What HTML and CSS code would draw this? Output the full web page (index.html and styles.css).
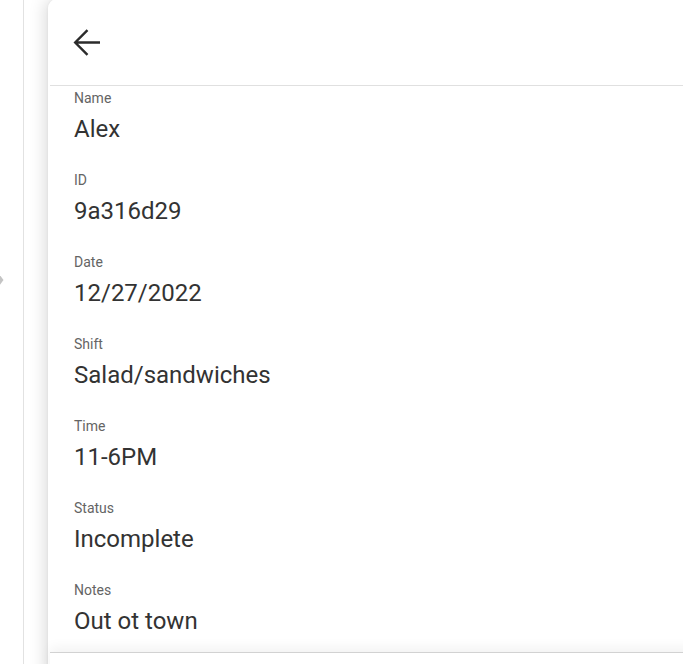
FILE: index.html
```html
<!DOCTYPE html>
<html lang="en">
<head>
<meta charset="utf-8">
<title>Shift details</title>
<link rel="stylesheet" href="styles.css">
</head>
<body>
<div class="page">
  <div class="rail">
    <svg class="rail-chevron" width="6" height="12" viewBox="0 0 6 12"><polygon points="0,0 4.5,6 0,12" fill="#c4c4c4"/></svg>
  </div>
  <div class="card">
    <header class="card-header">
      <button class="back" aria-label="Back">
        <svg width="30" height="30" viewBox="0 0 30 30"><path d="M28 14.5H3.5M15.5 2.2L3.2 14.5L15.5 26.8" fill="none" stroke="#2b2b2b" stroke-width="2.4"/></svg>
      </button>
    </header>
    <main class="fields">
      <div class="field"><div class="label">Name</div><div class="value">Alex</div></div>
      <div class="field"><div class="label">ID</div><div class="value">9a316d29</div></div>
      <div class="field"><div class="label">Date</div><div class="value">12/27/2022</div></div>
      <div class="field"><div class="label">Shift</div><div class="value">Salad/sandwiches</div></div>
      <div class="field"><div class="label">Time</div><div class="value">11-6PM</div></div>
      <div class="field"><div class="label">Status</div><div class="value">Incomplete</div></div>
      <div class="field"><div class="label">Notes</div><div class="value">Out ot town</div></div>
    </main>
    <footer class="card-footer"></footer>
  </div>
</div>
</body>
</html>
```

FILE: styles.css
```css
html, body {
  margin: 0;
  padding: 0;
  height: 100%;
  overflow: hidden;
  background: #fff;
  font-family: Roboto, "Liberation Sans", sans-serif;
}

.page {
  display: flex;
  height: 664px;
  position: relative;
}

.rail {
  width: 23px;
  flex: none;
  border-right: 1px solid #e2e2e2;
  margin-right: 24px;
  position: relative;
}

.rail-chevron {
  position: absolute;
  left: -1px;
  top: 274px;
}

.card {
  flex: none;
  width: 700px;
  height: 680px;
  margin-top: -1px;
  background: #fff;
  border-top-left-radius: 9px;
  box-shadow: -4px 0 16px rgba(0, 0, 0, 0.13), 0 0 3px rgba(0, 0, 0, 0.06);
  display: flex;
  flex-direction: column;
}

.card-header {
  height: 87px;
  flex: none;
  box-sizing: border-box;
  border-bottom: 1px solid #e0e0e0;
  margin-left: 2px;
  display: flex;
  align-items: center;
  padding-left: 24px;
}

.back {
  border: 0;
  background: none;
  padding: 0;
  margin: 1px 0 0 -2px;
  width: 30px;
  height: 30px;
  display: flex;
}

.fields {
  flex: none;
  height: 566px;
  box-sizing: border-box;
  padding: 4px 0 0 26px;
}

.field {
  height: 82px;
}

.label {
  font-size: 14px;
  line-height: 16px;
  color: #646464;
  margin-bottom: 9px;
}

.value {
  font-size: 24px;
  line-height: 28px;
  color: #333;
}

.card-footer {
  flex: none;
  height: 30px;
  margin-left: 2px;
  border-top: 1px solid #d2d2d2;
  box-shadow: 0 -5px 12px rgba(0, 0, 0, 0.05);
  background: #fff;
}
```
